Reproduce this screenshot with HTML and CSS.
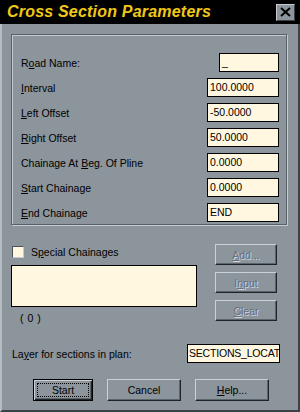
FILE: index.html
```html
<!DOCTYPE html>
<html lang="en">
  <head>
    <meta charset="UTF-8" />
    <title>Cross Section Parameters</title>
    <link rel="stylesheet" href="styles.css">
  </head>
  <body>
    <div class="window">
      <div class="titlebar">
        <span class="title">Cross Section Parameters</span>
        <span class="close">
          <svg width="11" height="10" viewBox="0 0 11 10">
            <path d="M1 1 L10 9 M10 1 L1 9" stroke="#000" stroke-width="2" fill="none" />
          </svg>
        </span>
      </div>

      <div class="client">
        <div class="group">
          <label>R<u>o</u>ad Name:</label>
          <span class="edit short">_</span>
          <label><u>I</u>nterval</label>
          <span class="edit">100.0000</span>
          <label><u>L</u>eft Offset</label>
          <span class="edit">-50.0000</span>
          <label><u>R</u>ight Offset</label>
          <span class="edit">50.0000</span>
          <label>Chainage At <u>B</u>eg. Of Pline</label>
          <span class="edit">0.0000</span>
          <label><u>S</u>tart Chainage</label>
          <span class="edit">0.0000</span>
          <label><u>E</u>nd Chainage</label>
          <span class="edit">END</span>
        </div>

        <div class="lower">
          <div class="list-col">
            <div class="check-row">
              <span class="checkbox"></span>
              <span>S<u>p</u>ecial Chainages</span>
            </div>
            <div class="listbox"></div>
            <div class="count">( 0 )</div>
          </div>
          <div class="side-buttons">
            <button class="btn disabled"><u>A</u>dd...</button>
            <button class="btn disabled">I<u>n</u>put</button>
            <button class="btn disabled"><u>C</u>lear</button>
          </div>
        </div>

        <div class="layer-row">
          <span>La<u>y</u>er for sections in plan:</span>
          <span class="edit layer">SECTIONS_LOCAT</span>
        </div>

        <div class="actions">
          <button class="btn default"><span class="focus">Start</span></button>
          <button class="btn wide">Cancel</button>
          <button class="btn wide"><u>H</u>elp...</button>
        </div>
      </div>
    </div>
  </body>
</html>
```

FILE: styles.css
```css
* {
  box-sizing: border-box;
}

body {
  margin: 0;
  background: #8c949c;
  font-family: "Liberation Sans", Arial, sans-serif;
  font-size: 10.5px;
  color: #000;
}

u {
  text-underline-offset: 1px;
}

.window {
  width: 300px;
  height: 412px;
  display: flex;
  flex-direction: column;
  background: #8c949c;
}

.titlebar {
  height: 24px;
  flex-shrink: 0;
  background: #000;
  display: flex;
  align-items: center;
  justify-content: space-between;
  padding: 0 5px 0 7px;
}

.title {
  color: #f0c818;
  font-size: 16px;
  font-weight: bold;
  font-style: italic;
  letter-spacing: 0.2px;
}

.close {
  width: 19px;
  height: 17px;
  background: #8c949c;
  border-top: 1px solid #c4cad0;
  border-left: 1px solid #c4cad0;
  border-right: 1px solid #3c4248;
  border-bottom: 1px solid #3c4248;
  display: flex;
  align-items: center;
  justify-content: center;
}

.client {
  flex: 1;
  display: flex;
  flex-direction: column;
  padding: 10px 10px 0 9px;
  border-left: 2px solid #b4bcc4;
  border-right: 2px solid #3c4248;
  border-bottom: 2px solid #3c4248;
}

/* etched group box */
.group {
  display: grid;
  grid-template-columns: 1fr 72px;
  row-gap: 6px;
  align-items: center;
  padding: 18px 7px 2px 9px;
  border: 1px solid #5a6168;
  box-shadow: 1px 1px 0 #c4cad0, inset 1px 1px 0 #c4cad0;
  margin-right: 1px;
}

.edit {
  display: block;
  height: 19px;
  line-height: 17px;
  padding: 0 2px;
  background: #fff7e0;
  border: 1px solid #000;
  white-space: nowrap;
  overflow: hidden;
}

.edit.short {
  width: 60px;
  justify-self: end;
}

.lower {
  display: flex;
  margin-top: 19px;
  gap: 18px;
}

.list-col {
  width: 186px;
  display: flex;
  flex-direction: column;
}

.check-row {
  display: flex;
  align-items: center;
  gap: 7px;
  height: 13px;
  margin: 1px 0 0 1px;
}

.checkbox {
  width: 12px;
  height: 12px;
  background: #fff7e0;
  border-top: 1px solid #4c5258;
  border-left: 1px solid #4c5258;
  border-right: 1px solid #c4cad0;
  border-bottom: 1px solid #c4cad0;
}

.listbox {
  height: 42px;
  margin-top: 7px;
  background: #fff7e0;
  border: 1px solid #000;
}

.count {
  margin: 5px 0 0 9px;
  letter-spacing: 0.5px;
}

.side-buttons {
  display: flex;
  flex-direction: column;
  gap: 7px;
}

.btn {
  font: inherit;
  color: #000;
  width: 62px;
  height: 21px;
  padding: 0;
  background: #8c949c;
  border-top: 1px solid #c8d0d8;
  border-left: 1px solid #c8d0d8;
  border-right: 1px solid #202428;
  border-bottom: 1px solid #202428;
  box-shadow: inset -1px -1px 0 #5c646c;
}

.btn.disabled {
  color: #68707a;
  text-shadow: 1px 1px 0 #d0d6dc;
}

.layer-row {
  display: flex;
  align-items: center;
  justify-content: space-between;
  margin: 20px 8px 0 1px;
}

.edit.layer {
  width: 93px;
  padding: 0 1px;
  letter-spacing: -0.2px;
}

.actions {
  display: flex;
  gap: 14px;
  margin: 16px 0 0 22px;
}

.actions .btn {
  height: 22px;
}

.btn.wide {
  width: 74px;
}

.btn.default {
  width: 60px;
  border: 1px solid #000;
  box-shadow: inset 1px 1px 0 #c8d0d8, inset -1px -1px 0 #202428, inset -2px -2px 0 #5c646c;
  padding: 3px;
}

.focus {
  display: block;
  height: 100%;
  line-height: 12px;
  border: 1px dotted #000;
}
```
